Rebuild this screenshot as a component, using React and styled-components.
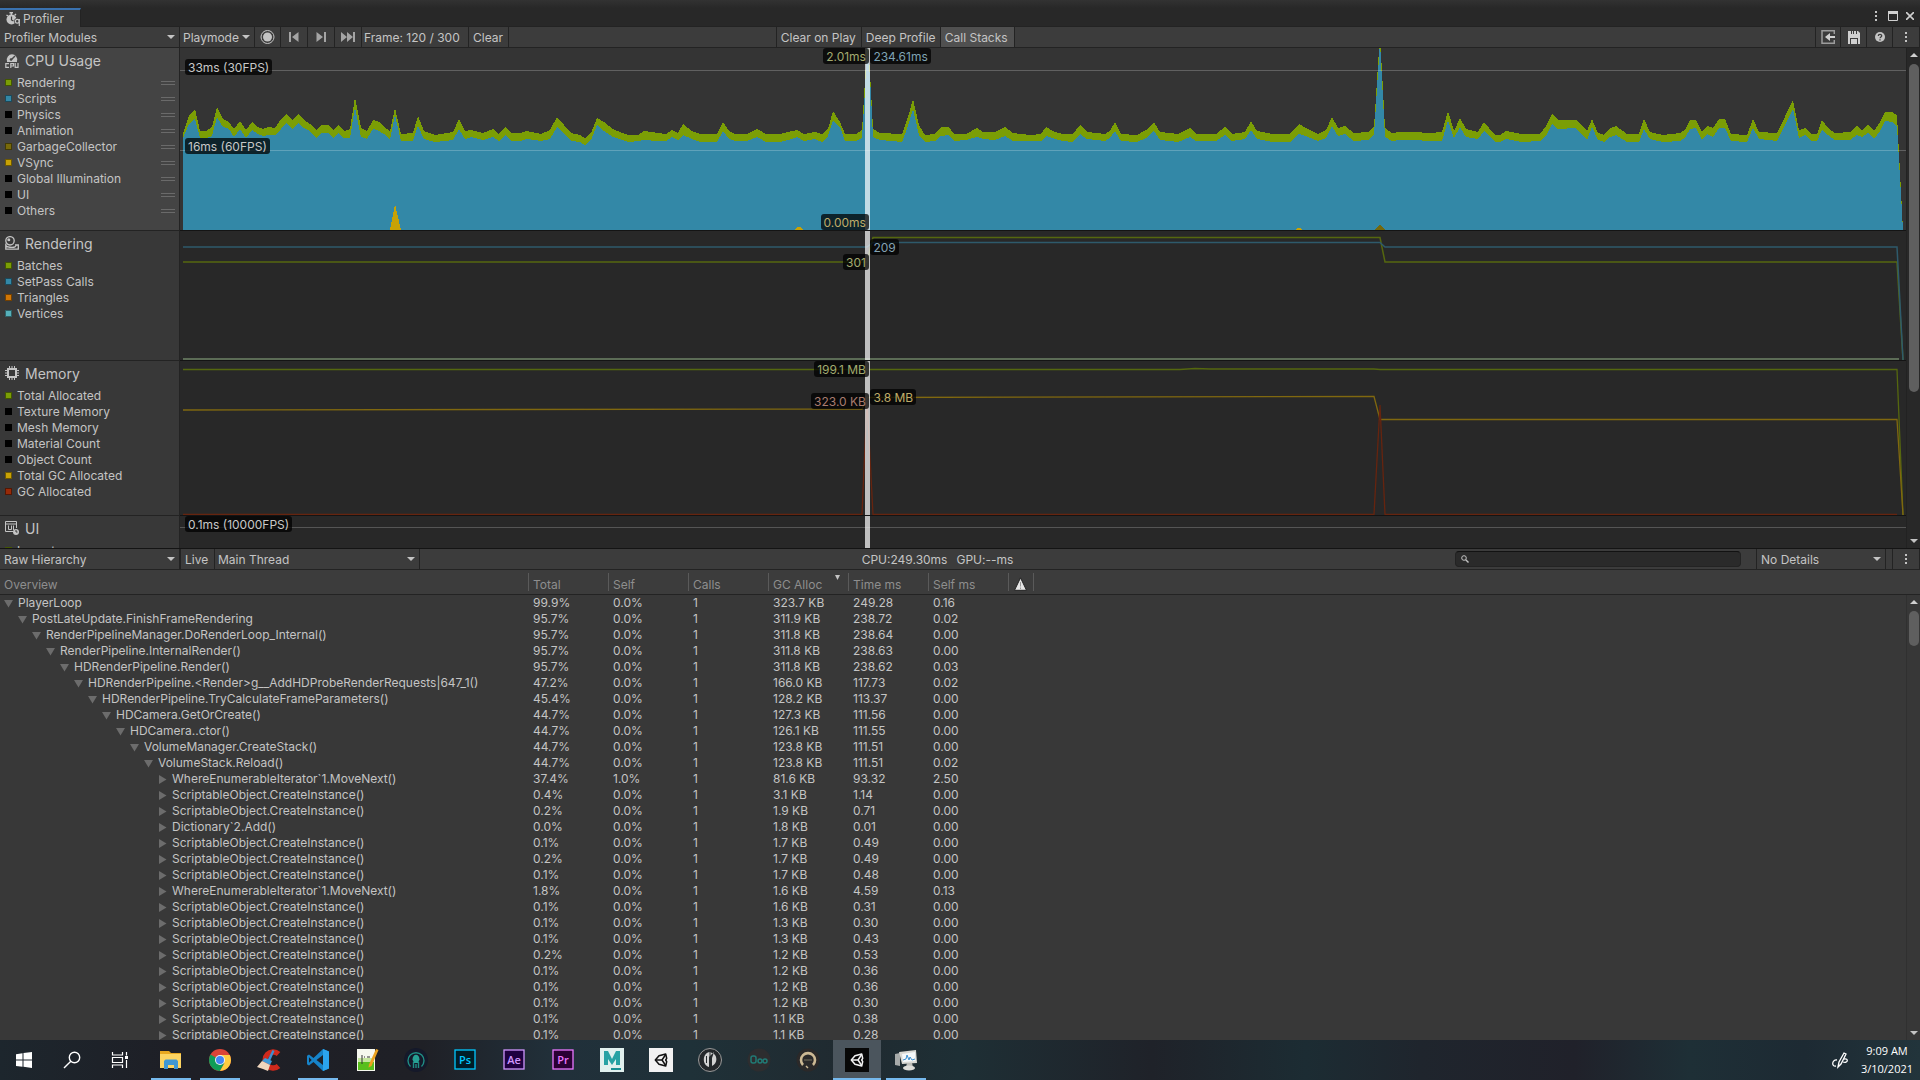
import React from 'react';
import styled, {createGlobalStyle} from 'styled-components';

const GlobalStyle = createGlobalStyle`
  * {
    box-sizing: border-box;
  }
  body {
    margin: 0;
    background: #383838;
  }
  button, select, input {
    font: inherit;
    color: inherit;
    margin: 0;
    padding: 0;
    border: 0;
    border-radius: 0;
    background: none;
    outline: none;
  }
  svg {
    display: block;
  }
`;

const line = '#232323';

const S = {
  Window: styled.main`
    height: 100vh;
    display: flex;
    flex-direction: column;
    overflow: hidden;
    background: #383838;
    color: #c4c4c4;
    font: 12px/16px Inter, 'Liberation Sans', sans-serif;
    white-space: nowrap;
  `,
  TabBar: styled.header`
    flex: none;
    height: 27px;
    padding-right: 3px;
    display: flex;
    justify-content: space-between;
    align-items: flex-end;
    background: linear-gradient(#323232, #282828 8px);
    box-shadow: inset 0 -1px ${line};
  `,
  Tab: styled.button`
    width: 81px;
    height: 19px;
    padding-left: 6px;
    display: flex;
    align-items: center;
    gap: 3px;
    background: #3c3c3c;
    border-top: 2px solid #3a72b0;
    border-right: 1px solid ${line};
  `,
  WindowButtons: styled.div`
    height: 22px;
    display: flex;
    align-items: center;
    gap: 3px;
  `,
  WindowButton: styled.button`
    width: 14px;
    height: 14px;
    display: grid;
    place-items: center;
  `,
  Toolbar: styled.div`
    flex: none;
    height: 21px;
    display: flex;
    background: #3c3c3c;
    border-bottom: 1px solid ${line};
  `,
  Spacer: styled.div`
    flex: ${props => props.$grow || 1};
    border-right: ${props => (props.$line ? `1px solid ${line}` : '0')};
  `,
  Divider: styled.div`
    flex: none;
    width: ${props => props.$width || 1}px;
    border-right: 1px solid ${line};
  `,
  ToolButton: styled.button`
    width: ${props => props.$width}px;
    display: grid;
    place-items: center;
    border-right: 1px solid ${line};
  `,
  TextButton: styled.button`
    width: ${props => props.$width}px;
    padding: 2px 0 0 4px;
    text-align: left;
    background: ${props => (props.$on ? '#505050' : 'transparent')};
    border-right: 1px solid ${line};
  `,
  Frame: styled.div`
    width: 107px;
    padding: 3px 2px 0;
    border-right: 1px solid ${line};
  `,
  Picker: styled.label`
    width: ${props => props.$width}px;
    display: grid;
    align-items: center;
    border-right: ${props => props.$edge || 1}px solid ${line};
    select, svg {
      grid-area: 1 / 1;
    }
    select {
      width: 100%;
      height: 20px;
      padding: 2px 0 0 ${props => props.$pad || 4}px;
      appearance: none;
    }
    option {
      background: #3c3c3c;
    }
    svg {
      justify-self: end;
      margin-right: 4px;
      pointer-events: none;
    }
  `,
  Stats: styled.div`
    display: flex;
    gap: 9px;
    padding-top: 3px;
  `,
  Search: styled.label`
    width: 286px;
    height: 16px;
    margin: 2px 15px 0 0;
    padding-left: 5px;
    display: flex;
    align-items: center;
    background: #2a2a2a;
    border: 1px solid ${line};
    border-top-color: #121212;
    border-radius: 4px;
    input {
      flex: 1;
      height: 14px;
    }
  `,
};

const Charts = {
  Area: styled.section`
    flex: none;
    height: 501px;
    display: flex;
    border-bottom: 1px solid #141414;
    overflow: hidden;
  `,
  List: styled.div`
    flex: 1;
    min-width: 0;
    overflow: hidden;
  `,
  Module: styled.article`
    height: ${props => props.$height}px;
    display: flex;
  `,
  Legend: styled.div`
    flex: none;
    width: 180px;
    padding: 4px 4px 0 5px;
    background: ${props => (props.$active ? '#444444' : '#383838')};
    border-right: 1px solid ${line};
    border-bottom: 1px solid ${line};
  `,
  Title: styled.h2`
    height: 23px;
    margin: 0;
    display: flex;
    align-items: flex-start;
    gap: 6px;
    font-size: 14px;
    line-height: 18px;
    font-weight: 400;
    svg {
      margin-top: 1px;
    }
  `,
  Series: styled.label`
    height: 16px;
    display: flex;
    align-items: center;
    gap: 5px;
    input {
      appearance: none;
      width: 7px;
      height: 7px;
      margin-bottom: 1px;
      background: ${props => props.$color};
      border: 1px solid rgba(0, 0, 0, 0.45);
    }
  `,
  Handle: styled.i`
    width: 14px;
    height: 4px;
    margin-left: auto;
    border: solid #6a6a6a;
    border-width: 1px 0;
  `,
  Plot: styled.div`
    flex: 1;
    min-width: 0;
    position: relative;
    background: ${props => (props.$active ? '#343434' : '#282828')};
    border-bottom: 1px solid #141414;
    svg {
      width: 100%;
      height: 100%;
    }
  `,
  Tag: styled.span`
    position: absolute;
    top: ${props => props.$top}px;
    ${props => {
      if (props.$side === 'before') return 'right: calc(60.2% - 2px);';
      if (props.$side === 'after') return 'left: 40%;';
      return 'left: 5px;';
    }}
    height: 16px;
    padding: 1px 3px 0;
    line-height: 15px;
    border-radius: 3px;
    background: rgba(0, 0, 0, 0.74);
    color: ${props => props.$color || '#c8c8c8'};
  `,
  Cursor: styled.i`
    position: absolute;
    top: 0;
    bottom: 0;
    left: 39.7%;
    width: 5px;
    background: rgba(255, 255, 255, 0.7);
  `,
};

const Scroll = {
  Track: styled.div`
    flex: none;
    width: 14px;
    padding: 5px 0 5px 1px;
    display: flex;
    flex-direction: column;
    align-items: center;
    background: ${props => (props.$dark ? '#282828' : '#373737')};
    border-left: 1px solid ${props => (props.$dark ? '#222222' : '#303030')};
  `,
  Thumb: styled.div`
    width: 10px;
    height: ${props => props.$height}px;
    margin: 7px 0 auto;
    border-radius: 5px;
    background: #5f5f5f;
  `,
};

const Tree = {
  Area: styled.section`
    flex: 1;
    min-height: 0;
    display: grid;
    grid-template: 25px 1fr / 1fr 14px;
    overflow: hidden;
  `,
  Head: styled.div`
    grid-column: 1 / -1;
    background: #3c3c3c;
    border-bottom: 1px solid ${line};
  `,
  Body: styled.div`
    min-height: 0;
    overflow: hidden;
  `,
  Table: styled.table`
    width: 100%;
    table-layout: fixed;
    border-collapse: collapse;
    th, td {
      padding: 0;
      text-align: left;
      font-weight: 400;
    }
  `,
  Col: styled.col`
    width: ${props => (props.$width ? `${props.$width}px` : 'auto')};
  `,
  HeadCell: styled.th`
    height: 24px;
    vertical-align: middle;
    color: #8e8e8e;
    div {
      height: 18px;
      padding: 4px 0 0 4px;
      border-left: ${props => (props.$first ? 0 : 1)}px solid #5a5a5a;
      display: flex;
      line-height: 16px;
    }
    svg {
      flex: none;
      margin: ${props => (props.$sorted ? '-2px 8px 0 auto' : '0')};
    }
  `,
  Cell: styled.td`
    height: 16px;
    line-height: 16px;
    div {
      padding-left: 5px;
    }
  `,
  Name: styled.div`
    && {
      height: 16px;
      padding-left: ${props => 4 + props.$depth * 14}px;
      display: flex;
      align-items: center;
      gap: 5px;
    }
  `,
  Fold: styled.button`
    width: 9px;
    height: 16px;
    display: grid;
    place-items: center;
  `,
};

const Task = {
  Bar: styled.footer`
    flex: none;
    height: 40px;
    display: flex;
    background: linear-gradient(90deg, #1d262d, #1e1f26 9%, #1f2026 22%, #21303a 29%, #1f3138 36%, #202a30 44%, #1e2f35 50%, #1f2229 60%, #1c2c33 68%, #1f252d 74%, #20212a 82%, #1e2f36 88%, #1d2a33 94%, #22343b);
  `,
  Apps: styled.div`
    display: flex;
    gap: 1px;
    margin-left: 3px;
  `,
  Button: styled.button`
    width: 48px;
    height: 40px;
    display: flex;
    flex-direction: column;
    align-items: center;
    padding-top: 8px;
    background: ${props => (props.$active ? '#4b555d' : 'none')};
    &::after {
      content: '';
      width: ${props => (props.$active ? 48 : 40)}px;
      height: 2px;
      margin-top: auto;
      background: ${props => (props.$open ? '#76b9ed' : 'none')};
    }
  `,
  Pen: styled.button`
    width: 28px;
    margin-left: auto;
    display: grid;
    place-items: center;
  `,
  Clock: styled.time`
    width: 66px;
    padding-top: 2px;
    text-align: center;
    color: #ffffff;
    font: 11px/18px 'Open Sans', sans-serif;
  `,
};

const Down = ({width = 8, height = 4}) => (
  <svg width={width} height={height} viewBox="0 0 8 4" preserveAspectRatio="none">
    <path d="M0 0h8L4 4z" fill="#c4c4c4" />
  </svg>
);

const Up = () => (
  <svg width="8" height="4" viewBox="0 0 8 4">
    <path d="M0 4h8L4 0z" fill="#d0d0d0" />
  </svg>
);

const Dots = () => (
  <svg width="4" height="12" viewBox="0 0 4 12" fill="#c4c4c4">
    <path d="M1 1h2v2H1zM1 5h2v2H1zM1 9h2v2H1z" />
  </svg>
);

const ProfilerIcon = () => (
  <svg width="14" height="14" viewBox="0 0 14 14" fill="none" stroke="#c4c4c4">
    <circle cx="5.500" cy="7.500" r="5" fill="#c4c4c4" stroke="none" />
    <path d="M3.500 .7h3.500M5.300 1v2M.5 3l1.500 1M10 2L8.500 3.500" strokeWidth="1.400" />
    <path d="M5.500 4.500V8l2 1" stroke="#3c3c3c" strokeWidth="1.200" />
    <circle cx="11.500" cy="9.300" r="3.300" fill="#3c3c3c" stroke="none" />
    <circle cx="11.300" cy="9.300" r="1.900" strokeWidth="1.200" />
    <path d="M13.300 7v7" strokeWidth="1.200" />
  </svg>
);

const CpuIcon = () => (
  <svg width="14" height="16" viewBox="0 0 14 16">
    <path d="M2 8a5.200 5.200 0 1 1 10 0v1H2z" fill="#c4c4c4" />
    <path d="M6 7l4-4" stroke="#444" strokeWidth="1.500" />
    <circle cx="6" cy="6.500" r="1.300" fill="#444" />
    <g fill="none" stroke="#c4c4c4" strokeWidth="1.200">
      <path d="M4 10.700H.8v3.700H4M5.800 15v-4.300h2.700v2.300H5.800M10.200 10v4.400h2.800V10" />
    </g>
  </svg>
);

const RenderIcon = () => (
  <svg width="14" height="14" viewBox="0 0 14 14" fill="none" stroke="#c4c4c4" strokeWidth="1.300">
    <circle cx="5" cy="4.800" r="4.200" />
    <circle cx="3.800" cy="3.800" r="1.500" fill="#c4c4c4" stroke="none" />
    <path d="M.8 7.500v5.700h12.500V9h-2.500c.5 1.800-1.500 2.300-3.800 2.300S2 11 .8 9.500" />
  </svg>
);

const MemoryIcon = () => (
  <svg width="14" height="14" viewBox="0 0 14 14" fill="none" stroke="#c4c4c4">
    <rect x="3" y="3" width="8" height="8" strokeWidth="2" />
    <path d="M4.500 0v2M7 0v2M9.500 0v2M4.500 12v2M7 12v2M9.500 12v2M0 4.500h2M0 7h2M0 9.500h2M12 4.500h2M12 7h2M12 9.500h2" />
  </svg>
);

const UiIcon = () => (
  <svg width="14" height="14" viewBox="0 0 14 14" fill="none" stroke="#c4c4c4">
    <path d="M8 10.500H.5V.5h11V7M0 3h12" />
    <path d="M3.500 4.500v4h3v-4M8.500 4.500V9" />
    <circle cx="11" cy="11" r="3" fill="#c4c4c4" stroke="none" />
    <path d="M11 9v2h1.500" stroke="#383838" />
  </svg>
);

// [x, top of rendering band, top of scripts band]
const cpuFrames = [
  [183, 134, 138], [189, 115, 124], [195, 109, 119], [200, 131, 138], [206, 131, 138], [212, 127, 136],
  [217, 107, 117], [223, 119, 127], [229, 122, 129], [234, 129, 137], [240, 121, 129], [246, 130, 138],
  [252, 122, 130], [258, 127, 134], [263, 129, 136], [268, 127, 135], [275, 128, 135], [281, 119, 129],
  [286, 114, 123], [292, 120, 129], [298, 114, 123], [304, 120, 128], [310, 124, 131], [316, 130, 138],
  [321, 125, 133], [328, 125, 133], [333, 130, 138], [338, 125, 133], [344, 131, 138], [350, 129, 138],
  [355, 97, 107], [361, 128, 137], [367, 131, 139], [373, 120, 129], [379, 122, 131], [384, 127, 134],
  [390, 131, 139], [395, 108, 115], [401, 134, 141], [413, 133, 141], [418, 116, 126], [424, 131, 139],
  [435, 135, 142], [453, 132, 140], [459, 119, 129], [465, 131, 139], [471, 130, 137], [483, 133, 140],
  [493, 129, 137], [499, 134, 141], [505, 127, 135], [512, 133, 141], [520, 133, 141], [527, 131, 139],
  [541, 134, 141], [550, 130, 139], [557, 117, 127], [571, 133, 141], [580, 135, 142], [585, 138, 145],
  [591, 133, 140], [597, 118, 125], [604, 122, 131], [613, 129, 137], [622, 133, 140], [629, 135, 142],
  [638, 135, 141], [644, 131, 140], [658, 133, 141], [666, 134, 141], [672, 130, 137], [678, 133, 140],
  [683, 124, 135], [692, 131, 139], [700, 134, 142], [717, 134, 142], [723, 122, 131], [729, 131, 139],
  [735, 134, 141], [747, 134, 141], [757, 129, 137], [766, 134, 142], [780, 134, 142], [788, 132, 140],
  [797, 130, 137], [804, 134, 141], [815, 132, 139], [822, 134, 142], [828, 129, 136], [833, 111, 121],
  [840, 122, 127], [845, 134, 141], [856, 134, 141], [862, 130, 138], [865, 80, 90], [867, 40, 48],
  [868, 40, 48], [871, 90, 95], [873, 129, 137], [880, 133, 140], [902, 134, 142], [908, 117, 126],
  [913, 99, 109], [919, 125, 135], [925, 135, 142], [935, 134, 141], [941, 127, 136], [949, 127, 135],
  [954, 134, 141], [966, 134, 140], [977, 128, 137], [983, 132, 139], [995, 132, 140], [1005, 127, 136],
  [1013, 133, 141], [1030, 135, 141], [1041, 134, 141], [1046, 127, 136], [1055, 132, 139], [1063, 134, 141],
  [1073, 134, 142], [1080, 125, 134], [1087, 132, 139], [1105, 134, 141], [1110, 131, 138], [1115, 122, 131],
  [1121, 134, 141], [1137, 135, 142], [1146, 130, 138], [1154, 122, 131], [1160, 132, 140], [1178, 134, 142],
  [1190, 128, 137], [1196, 134, 141], [1216, 134, 141], [1225, 127, 135], [1232, 134, 141], [1245, 132, 139],
  [1251, 121, 130], [1257, 131, 139], [1272, 134, 142], [1290, 134, 142], [1299, 124, 134], [1308, 129, 137],
  [1318, 134, 141], [1326, 130, 138], [1332, 117, 126], [1338, 128, 136], [1345, 126, 134], [1354, 133, 141],
  [1368, 132, 140], [1374, 127, 135], [1380, 34, 42], [1385, 128, 137], [1392, 133, 141], [1400, 132, 140],
  [1414, 132, 140], [1430, 133, 141], [1442, 132, 141], [1448, 111, 120], [1454, 131, 138], [1460, 118, 127],
  [1466, 129, 137], [1478, 132, 139], [1484, 122, 131], [1495, 135, 142], [1500, 135, 142], [1506, 131, 139],
  [1522, 134, 142], [1540, 134, 141], [1546, 126, 136], [1552, 114, 124], [1558, 120, 129], [1576, 120, 128],
  [1587, 131, 140], [1592, 119, 127], [1598, 133, 140], [1604, 135, 142], [1610, 128, 137], [1616, 126, 135],
  [1627, 134, 142], [1639, 134, 142], [1644, 119, 129], [1650, 132, 139], [1663, 135, 142], [1680, 133, 141],
  [1685, 130, 138], [1690, 120, 129], [1696, 120, 128], [1702, 132, 140], [1707, 126, 134], [1713, 128, 137],
  [1719, 119, 128], [1725, 119, 128], [1731, 134, 141], [1747, 135, 142], [1753, 119, 128], [1759, 132, 139],
  [1777, 133, 141], [1793, 100, 109], [1799, 130, 138], [1805, 128, 135], [1811, 134, 141], [1817, 134, 141],
  [1822, 120, 130], [1828, 128, 135], [1835, 133, 140], [1850, 132, 140], [1857, 126, 135], [1862, 130, 137],
  [1868, 125, 133], [1874, 131, 139], [1880, 122, 131], [1885, 112, 121], [1892, 112, 122], [1897, 115, 126],
  [1903, 230, 230],
];

const area = index => `M183 230 ${cpuFrames.map(f => `L${f[0]} ${f[index]}`).join(' ')} Z`;

const CpuPlot = () => (
  <svg viewBox="180 48 1726 182" preserveAspectRatio="none" shapeRendering="crispEdges">
    <path d={area(1)} fill="#7b9e05" />
    <path d={area(2)} fill="#3388a7" />
    <path d="M390 230L395 204L401 230zM794 230l3-3h3l3 3zM1295 230l3-2h2l2 2z" fill="#c8a205" />
    <path d="M1374 230l6-5 6 5z" fill="#73680d" />
    <path d="M180 70.500H1906M180 150.500H1906" stroke="#ffffff" strokeOpacity="0.22" />
  </svg>
);

const RenderingPlot = () => (
  <svg viewBox="180 231 1726 129" preserveAspectRatio="none" fill="none" strokeWidth="1.500">
    <path d="M183 359H1899" stroke="#5c6c56" strokeWidth="2" />
    <path d="M183 262H867L873 237.500H1380L1385 262H1897L1903 360" stroke="#55670f" />
    <path d="M183 247H867L873 242.500H1380L1385 247H1897L1903 360" stroke="#2e5a6b" />
  </svg>
);

const MemoryPlot = () => (
  <svg viewBox="180 361 1726 154" preserveAspectRatio="none" fill="none" strokeWidth="1.300">
    <path d="M183 369.500H1180L1195 368.500L1210 369H1374L1380 369.500H1897L1903 515" stroke="#55670f" />
    <path d="M183 410L862 409L867 397.500L1374 396.500L1380 419.500H1897L1903 515" stroke="#80680f" />
    <path d="M183 514.500H862L867 400L873 514.500H1374L1380 405L1385 514.500H1897" stroke="#66240f" />
  </svg>
);

const UiPlot = () => (
  <svg viewBox="180 516 1726 60" preserveAspectRatio="none">
    <path d="M180 527.500H1906" stroke="#555555" />
  </svg>
);

const green = '#7b9e05';
const blue = '#3388a7';
const yellow = '#c8a205';
const off = '#000000';

const modules = [
  {
    title: 'CPU Usage', Icon: CpuIcon, Plot: CpuPlot, height: 183, active: true,
    series: [
      ['Rendering', green], ['Scripts', blue], ['Physics', off], ['Animation', off],
      ['GarbageCollector', '#786a0b'], ['VSync', yellow], ['Global Illumination', off], ['UI', off], ['Others', off],
    ],
    tags: [
      {text: '33ms (30FPS)', top: 11},
      {text: '16ms (60FPS)', top: 90},
      {text: '2.01ms', top: 0, side: 'before', color: '#a3ab70'},
      {text: '234.61ms', top: 0, side: 'after', color: '#7fa3b3'},
      {text: '0.00ms', top: 166, side: 'before', color: '#bfac69'},
    ],
  },
  {
    title: 'Rendering', Icon: RenderIcon, Plot: RenderingPlot, height: 130,
    series: [['Batches', green], ['SetPass Calls', blue], ['Triangles', '#d07605'], ['Vertices', '#56b0ba']],
    tags: [
      {text: '209', top: 8, side: 'after', color: '#84a3b3'},
      {text: '301', top: 23, side: 'before', color: '#a3ab70'},
    ],
  },
  {
    title: 'Memory', Icon: MemoryIcon, Plot: MemoryPlot, height: 155,
    series: [
      ['Total Allocated', green], ['Texture Memory', off], ['Mesh Memory', off], ['Material Count', off],
      ['Object Count', off], ['Total GC Allocated', yellow], ['GC Allocated', '#982a08'],
    ],
    tags: [
      {text: '199.1 MB', top: 0, side: 'before', color: '#a3ab70'},
      {text: '323.0 KB', top: 32, side: 'before', color: '#a97c70'},
      {text: '3.8 MB', top: 28, side: 'after', color: '#bfac69'},
    ],
  },
  {
    title: 'UI', Icon: UiIcon, Plot: UiPlot, height: 61,
    series: [['Layout', green]],
    tags: [{text: '0.1ms (10000FPS)', top: 0}],
  },
];

const instance = 'ScriptableObject.CreateInstance()';

// depth, name, total, self, gc alloc, time ms, self ms
const rows = [
  [0, 'PlayerLoop', '99.9%', '0.0%', '323.7 KB', '249.28', '0.16'],
  [1, 'PostLateUpdate.FinishFrameRendering', '95.7%', '0.0%', '311.9 KB', '238.72', '0.02'],
  [2, 'RenderPipelineManager.DoRenderLoop_Internal()', '95.7%', '0.0%', '311.8 KB', '238.64', '0.00'],
  [3, 'RenderPipeline.InternalRender()', '95.7%', '0.0%', '311.8 KB', '238.63', '0.00'],
  [4, 'HDRenderPipeline.Render()', '95.7%', '0.0%', '311.8 KB', '238.62', '0.03'],
  [5, 'HDRenderPipeline.<Render>g__AddHDProbeRenderRequests|647_1()', '47.2%', '0.0%', '166.0 KB', '117.73', '0.02'],
  [6, 'HDRenderPipeline.TryCalculateFrameParameters()', '45.4%', '0.0%', '128.2 KB', '113.37', '0.00'],
  [7, 'HDCamera.GetOrCreate()', '44.7%', '0.0%', '127.3 KB', '111.56', '0.00'],
  [8, 'HDCamera..ctor()', '44.7%', '0.0%', '126.1 KB', '111.55', '0.00'],
  [9, 'VolumeManager.CreateStack()', '44.7%', '0.0%', '123.8 KB', '111.51', '0.00'],
  [10, 'VolumeStack.Reload()', '44.7%', '0.0%', '123.8 KB', '111.51', '0.02'],
  [11, 'WhereEnumerableIterator`1.MoveNext()', '37.4%', '1.0%', '81.6 KB', '93.32', '2.50'],
  [11, instance, '0.4%', '0.0%', '3.1 KB', '1.14', '0.00'],
  [11, instance, '0.2%', '0.0%', '1.9 KB', '0.71', '0.00'],
  [11, 'Dictionary`2.Add()', '0.0%', '0.0%', '1.8 KB', '0.01', '0.00'],
  [11, instance, '0.1%', '0.0%', '1.7 KB', '0.49', '0.00'],
  [11, instance, '0.2%', '0.0%', '1.7 KB', '0.49', '0.00'],
  [11, instance, '0.1%', '0.0%', '1.7 KB', '0.48', '0.00'],
  [11, 'WhereEnumerableIterator`1.MoveNext()', '1.8%', '0.0%', '1.6 KB', '4.59', '0.13'],
  [11, instance, '0.1%', '0.0%', '1.6 KB', '0.31', '0.00'],
  [11, instance, '0.1%', '0.0%', '1.3 KB', '0.30', '0.00'],
  [11, instance, '0.1%', '0.0%', '1.3 KB', '0.43', '0.00'],
  [11, instance, '0.2%', '0.0%', '1.2 KB', '0.53', '0.00'],
  [11, instance, '0.1%', '0.0%', '1.2 KB', '0.36', '0.00'],
  [11, instance, '0.1%', '0.0%', '1.2 KB', '0.36', '0.00'],
  [11, instance, '0.1%', '0.0%', '1.2 KB', '0.30', '0.00'],
  [11, instance, '0.1%', '0.0%', '1.1 KB', '0.38', '0.00'],
  [11, instance, '0.1%', '0.0%', '1.1 KB', '0.28', '0.00'],
];

const columns = ['Total', 'Self', 'Calls', 'GC Alloc', 'Time ms', 'Self ms'];

const Picker = ({label, value, ...props}) => (
  <S.Picker {...props}>
    <select aria-label={label} defaultValue={value}>
      <option>{value}</option>
    </select>
    <Down />
  </S.Picker>
);

const Scrollbar = ({dark, thumb}) => (
  <Scroll.Track $dark={dark}>
    <Up />
    <Scroll.Thumb $height={thumb} />
    <Down />
  </Scroll.Track>
);

const Cols = () => (
  <colgroup>
    <Tree.Col $width={528} />
    {columns.map(name => <Tree.Col key={name} $width={80} />)}
    <Tree.Col $width={25} />
    <Tree.Col />
  </colgroup>
);

const UnityMark = ({color}) => (
  <g fill="none" stroke={color} strokeWidth="1.500" strokeLinejoin="round">
    <path d="M6.300 12l3.700-4.300 6.700-1.700 1 4.300-1 1.700 1 1.700-1 4.300-6.700-1.700z" />
    <path d="M6.300 12h6.700M13 12l3.700-5.500M13 12l3.700 5.500" />
  </g>
);

const Adobe = ({text, color, fill}) => (
  <svg width="24" height="24" viewBox="0 0 24 24">
    <rect x="2" y="2" width="20" height="19" fill={fill} stroke={color} strokeWidth="1.300" />
    <text x="12" y="16" textAnchor="middle" fill={color} fontFamily="Open Sans, sans-serif" fontSize="11" fontWeight="600">{text}</text>
  </svg>
);

const Svg = ({children}) => (
  <svg width="24" height="24" viewBox="0 0 24 24">{children}</svg>
);

const system = [
  ['Start', (
    <Svg>
      <path d="M4 6.300l6.500-1v6.200H4zM11.500 5.100L20 4v7.500h-8.500zM4 12.500h6.500v6.300L4 17.900zM11.500 12.500H20V20l-8.500-1.200z" fill="#fff" />
    </Svg>
  )],
  ['Search', (
    <Svg>
      <g fill="none" stroke="#fff" strokeWidth="1.400">
        <circle cx="14.500" cy="9.500" r="5.200" />
        <path d="M10.800 13.200L4 20" />
      </g>
    </Svg>
  )],
  ['Task View', (
    <Svg>
      <g fill="none" stroke="#fff" strokeWidth="1.200">
        <path d="M4.500 4v3h10V4M4.500 20v-3h10v3M4.500 9.500h10v5h-10zM18.500 4v3.500M18.500 12v8" />
        <path d="M17 8h3v3h-3z" fill="#fff" stroke="none" />
      </g>
    </Svg>
  )],
];

const apps = [
  ['File Explorer', (
    <Svg>
      <path d="M1 3h9l2 2h10v15H1z" fill="#e8a820" />
      <path d="M1 6h21v14H1z" fill="#fcd462" />
      <path d="M5 21v-8l1.500-1.500h11L19 13v8h-4v-4H9v4z" fill="#3f97d3" />
    </Svg>
  ), true],
  ['Chrome', (
    <Svg>
      <circle cx="12" cy="12" r="11" fill="#db4437" />
      <path d="M2.500 6.500A11 11 0 0 0 12 23l4.500-8L12 12z" fill="#0f9d58" />
      <path d="M21.800 7H12v5l4.500 3L12 23A11 11 0 0 0 21.800 7z" fill="#ffcd40" />
      <circle cx="12" cy="12" r="5" fill="#f1f1f1" />
      <circle cx="12" cy="12" r="4" fill="#4285f4" />
    </Svg>
  ), true],
  ['CCleaner', (
    <Svg>
      <path d="M21.500 6A8 8 0 1 0 21.500 18" fill="none" stroke="#d0291c" strokeWidth="5.500" />
      <path d="M15.500 2l2 1-4.500 10-2.500-1z" fill="#3d8fd1" />
      <path d="M8 10l7 3-2 4-8-4z" fill="#3f9ad8" />
      <path d="M5 13l8 4-2 6-5-2-6-2z" fill="#f0d6bd" />
    </Svg>
  )],
  ['Visual Studio Code', (
    <Svg>
      <path d="M17 1l6 2.500v17L17 23 7.500 14 3 17.500 1 16.300v-8.600L3 6.500 7.500 10z" fill="#1683c9" />
      <path d="M17 1l6 2.500v17L17 23z" fill="#2ba4ee" />
      <path d="M17 7v10l-6.500-5zM3 9.200v5.600L5.700 12z" fill="#1e2027" />
    </Svg>
  ), true],
  ['Notepad++', (
    <Svg>
      <path d="M2 1h18v22H2z" fill="#f6f8ef" />
      <path d="M3 13h16v9H3z" fill="#58bf1c" />
      <path d="M3 10h16v4H3z" fill="#c6e6a0" />
      <path d="M7 7v9M9 9h1M12 9h3" stroke="#333" />
      <path d="M21 1l2.500 1-7 16-3 1.500.5-3z" fill="#eba21f" />
    </Svg>
  )],
  ['GitKraken', (
    <Svg>
      <circle cx="12" cy="12" r="12" fill="#15192a" />
      <path d="M6.500 18.500a8 8 0 1 1 11 0M9.500 20v-6M14.500 20v-6M12 16v4" fill="none" stroke="#1f8e85" strokeWidth="1.400" />
      <path d="M8.500 11.500c0-6.500 7-6.500 7 0L14 15h-4z" fill="#27a094" />
    </Svg>
  )],
  ['Photoshop', <Adobe text="Ps" color="#00c8ff" fill="#001d26" />],
  ['After Effects', <Adobe text="Ae" color="#cf96fd" fill="#1f0040" />],
  ['Premiere Pro', <Adobe text="Pr" color="#ea77ff" fill="#2a0034" />],
  ['Maya', (
    <Svg>
      <path d="M0 0h24v24H0z" fill="#e0f0ee" />
      <path d="M4 17V3h4l4 8 4-8h4v14h-4v-6l-4 6-4-6v6z" fill="#27a2a4" />
      <path d="M11 20h10v2H11z" fill="#1a8f93" />
    </Svg>
  )],
  ['Unity Hub', (
    <Svg>
      <path d="M0 0h24v24H0z" fill="#f2f2f2" />
      <UnityMark color="#111" />
    </Svg>
  )],
  ['Launcher', (
    <Svg>
      <circle cx="12" cy="12" r="11.500" fill="#25282b" stroke="#9a9a9a" />
      <path d="M12 4C4 5 4 17 11 19V9l5-5-2 6v8c6-3 5-10 2-12" fill="#d2d2d2" />
      <path d="M12 3v18M8.500 8v7" stroke="#25282b" />
    </Svg>
  )],
  ['Qoo', (
    <Svg>
      <circle cx="12" cy="12" r="11.500" fill="#2d2d2f" />
      <g fill="none" stroke="#217a75" strokeWidth="1.500">
        <rect x="4" y="8" width="5" height="7" rx="2" />
        <circle cx="13" cy="13" r="2" />
        <circle cx="18" cy="13" r="2" />
      </g>
    </Svg>
  )],
  ['Recorder', (
    <Svg>
      <circle cx="12" cy="12" r="11.500" fill="#2b2929" />
      <path d="M7 17a7 7 0 1 1 10 0" fill="none" stroke="#cdb994" strokeWidth="2.600" />
      <path d="M8 12h8" stroke="#77705f" />
      <path d="M10 18l2 2" stroke="#cdb994" strokeWidth="1.500" />
    </Svg>
  )],
  ['Unity', (
    <Svg>
      <path d="M0 0h24v24H0z" fill="#080808" />
      <UnityMark color="#f2f2f2" />
    </Svg>
  ), true, true],
  ['Resource Monitor', (
    <Svg>
      <path d="M1 6l5-1v13l-5-1z" fill="#a7aaa9" />
      <path d="M5 4l17-2 1 13-15 1z" fill="#d9d9d4" />
      <path d="M8 6l13-2 .5 9L9 14z" fill="#f4f8fa" />
      <path d="M9 12l3-1 1-4 2 5 1-3 2 3 3-1" fill="none" stroke="#3b8fd0" />
      <path d="M13 15h5l1 4H12z" fill="#bdbdb9" />
      <ellipse cx="15" cy="20" rx="6" ry="2.500" fill="#dcdcd8" />
    </Svg>
  ), true],
];

const App = () => {
  return (
    <>
      <GlobalStyle />
      <S.Window>
        <S.TabBar>
          <S.Tab><ProfilerIcon />Profiler</S.Tab>
          <S.WindowButtons>
            <S.WindowButton aria-label="Window menu"><Dots /></S.WindowButton>
            <S.WindowButton aria-label="Maximize">
              <svg width="10" height="10" viewBox="0 0 10 10">
                <path d="M.5.5h9v9h-9z" fill="none" stroke="#d0d0d0" />
                <path d="M0 0h10v3H0z" fill="#d0d0d0" />
              </svg>
            </S.WindowButton>
            <S.WindowButton aria-label="Close">
              <svg width="8" height="8" viewBox="0 0 8 8">
                <path d="M0 0l8 8M8 0L0 8" stroke="#d0d0d0" strokeWidth="1.600" />
              </svg>
            </S.WindowButton>
          </S.WindowButtons>
        </S.TabBar>

        <S.Toolbar>
          <Picker label="Modules" value="Profiler Modules" $width={180} />
          <Picker label="Target" value="Playmode" $width={75} $pad={3} />
          <S.ToolButton $width={26} aria-label="Record">
            <svg width="15" height="16" viewBox="0 0 15 16">
              <circle cx="7.500" cy="8" r="6.500" fill="none" stroke="#c4c4c4" />
              <circle cx="7.500" cy="8" r="4.500" fill="#c4c4c4" />
            </svg>
          </S.ToolButton>
          <S.ToolButton $width={27} aria-label="Previous frame">
            <svg width="10" height="10" viewBox="0 0 10 10" fill="#a4a4a4"><path d="M0 0h2v10H0zM9.500 0v10L3 5z" /></svg>
          </S.ToolButton>
          <S.ToolButton $width={27} aria-label="Next frame">
            <svg width="10" height="10" viewBox="0 0 10 10" fill="#a4a4a4"><path d="M8 0h2v10H8zM.5 0v10L7 5z" /></svg>
          </S.ToolButton>
          <S.ToolButton $width={27} aria-label="Current frame">
            <svg width="14" height="10" viewBox="0 0 14 10" fill="#a4a4a4"><path d="M12 0h2v10h-2zM0 0v10l6-5zM6 0v10l6-5z" /></svg>
          </S.ToolButton>
          <S.Frame>Frame: 120 / 300</S.Frame>
          <S.TextButton $width={40}>Clear</S.TextButton>
          <S.Spacer $line />
          <S.TextButton $width={85}>Clear on Play</S.TextButton>
          <S.TextButton $width={79}>Deep Profile</S.TextButton>
          <S.TextButton $width={74} $on aria-pressed="true">Call Stacks</S.TextButton>
          <S.Spacer $grow={3} $line />
          <S.ToolButton $width={25} aria-label="Load">
            <svg width="14" height="14" viewBox="0 0 14 14" fill="none">
              <path d="M13.300 4V.8H1v12.400h12.300V10" stroke="#9c9c9c" strokeWidth="1.500" />
              <path d="M4 7l5-4v3h5v2H9v3z" fill="#d0d0d0" />
            </svg>
          </S.ToolButton>
          <S.ToolButton $width={26} aria-label="Save">
            <svg width="12" height="13" viewBox="0 0 12 13">
              <path d="M0 0h10l2 2v11H0z" fill="#d0d0d0" />
              <path d="M3 0h1v3H3zM5 0h1v3H5zM8 0h1v3H8zM2 7h8v6H9V8H3v5H2z" fill="#3c3c3c" />
            </svg>
          </S.ToolButton>
          <S.ToolButton $width={26} aria-label="Help">
            <svg width="10" height="10" viewBox="0 0 10 10">
              <circle cx="5" cy="5" r="5" fill="#c4c4c4" />
              <path d="M3.300 4C3.300 1.700 6.700 1.800 6.700 3.800 6.700 5 5 4.900 5 6.300M5 7.200v1.200" fill="none" stroke="#3c3c3c" strokeWidth="1.300" />
            </svg>
          </S.ToolButton>
          <S.ToolButton $width={27} aria-label="More"><Dots /></S.ToolButton>
        </S.Toolbar>

        <Charts.Area>
          <Charts.List>
            {modules.map(({title, Icon, Plot, height, active, series, tags}) => (
              <Charts.Module key={title} $height={height}>
                <Charts.Legend $active={active}>
                  <Charts.Title><Icon />{title}</Charts.Title>
                  {series.map(([name, color]) => (
                    <Charts.Series key={name} $color={color}>
                      <input type="checkbox" defaultChecked={color !== off} />
                      {name}
                      {active && <Charts.Handle />}
                    </Charts.Series>
                  ))}
                </Charts.Legend>
                <Charts.Plot $active={active}>
                  <Plot />
                  <Charts.Cursor />
                  {tags.map(tag => (
                    <Charts.Tag key={tag.text} $top={tag.top} $side={tag.side} $color={tag.color}>{tag.text}</Charts.Tag>
                  ))}
                </Charts.Plot>
              </Charts.Module>
            ))}
          </Charts.List>
          <Scrollbar dark thumb={328} />
        </Charts.Area>

        <S.Toolbar>
          <Picker label="View" value="Raw Hierarchy" $width={181} $edge={2} />
          <S.TextButton $width={34}>Live</S.TextButton>
          <Picker label="Thread" value="Main Thread" $width={205} $pad={3} />
          <S.Spacer />
          <S.Stats>
            <span>CPU:249.30ms</span>
            <span>GPU:--ms</span>
          </S.Stats>
          <S.Spacer />
          <S.Search>
            <svg width="8" height="8" viewBox="0 0 8 8" fill="none" stroke="#c4c4c4">
              <circle cx="3" cy="3" r="2.300" />
              <path d="M4.700 4.700L7.500 7.500" strokeWidth="1.400" />
            </svg>
            <input type="text" aria-label="Search" />
          </S.Search>
          <S.Divider />
          <Picker label="Details" value="No Details" $width={129} />
          <S.Divider $width={7} />
          <S.ToolButton $width={27} aria-label="More"><Dots /></S.ToolButton>
        </S.Toolbar>

        <Tree.Area>
          <Tree.Head>
            <Tree.Table>
              <Cols />
              <thead>
                <tr>
                  <Tree.HeadCell $first><div>Overview</div></Tree.HeadCell>
                  {columns.map(name => (
                    <Tree.HeadCell key={name} $sorted={name === 'GC Alloc'}>
                      <div>
                        {name}
                        {name === 'GC Alloc' && <Down width={5} height={5} />}
                      </div>
                    </Tree.HeadCell>
                  ))}
                  <Tree.HeadCell aria-label="Warnings">
                    <div>
                      <svg width="15" height="14" viewBox="0 0 15 14">
                        <path d="M7.500 .8l6 12.500h-12z" fill="#e4e4e4" stroke="#222" />
                        <path d="M7.500 5v4.500M7.500 10.500v1.500" stroke="#999" />
                      </svg>
                    </div>
                  </Tree.HeadCell>
                  <Tree.HeadCell as="td"><div /></Tree.HeadCell>
                </tr>
              </thead>
            </Tree.Table>
          </Tree.Head>
          <Tree.Body>
            <Tree.Table>
              <Cols />
              <tbody>
                {rows.map(([depth, name, total, self, gc, time, selfMs], i) => (
                  <tr key={i}>
                    <Tree.Cell>
                      <Tree.Name $depth={depth}>
                        <Tree.Fold aria-label="Toggle" aria-expanded={depth < 11}>
                          <svg width="9" height="9" viewBox="0 0 9 9" fill="#6c6c6c">
                            <path d={depth < 11 ? 'M0 1h9L4.500 8.500z' : 'M1 0v9l7.500-4.500z'} />
                          </svg>
                        </Tree.Fold>
                        {name}
                      </Tree.Name>
                    </Tree.Cell>
                    {[total, self, '1', gc, time, selfMs].map((value, c) => (
                      <Tree.Cell key={c}><div>{value}</div></Tree.Cell>
                    ))}
                    <Tree.Cell colSpan={2} />
                  </tr>
                ))}
              </tbody>
            </Tree.Table>
          </Tree.Body>
          <Scrollbar thumb={35} />
        </Tree.Area>

        <Task.Bar>
          {system.map(([name, icon]) => <Task.Button key={name} aria-label={name}>{icon}</Task.Button>)}
          <Task.Apps>
            {apps.map(([name, icon, open, active]) => (
              <Task.Button key={name} aria-label={name} $open={open} $active={active}>{icon}</Task.Button>
            ))}
          </Task.Apps>
          <Task.Pen aria-label="Ink workspace">
            <svg width="18" height="18" viewBox="0 0 18 18" fill="none" stroke="#fff" strokeWidth="1.300">
              <path d="M6 9c-5-1-6 7-1 6M7 16l1-5 5-9 2 1-5 10z" />
              <path d="M13 8c5-1 4 5-1 3" />
            </svg>
          </Task.Pen>
          <Task.Clock>9:09 AM<br />3/10/2021</Task.Clock>
        </Task.Bar>
      </S.Window>
    </>
  );
};

export default App;
